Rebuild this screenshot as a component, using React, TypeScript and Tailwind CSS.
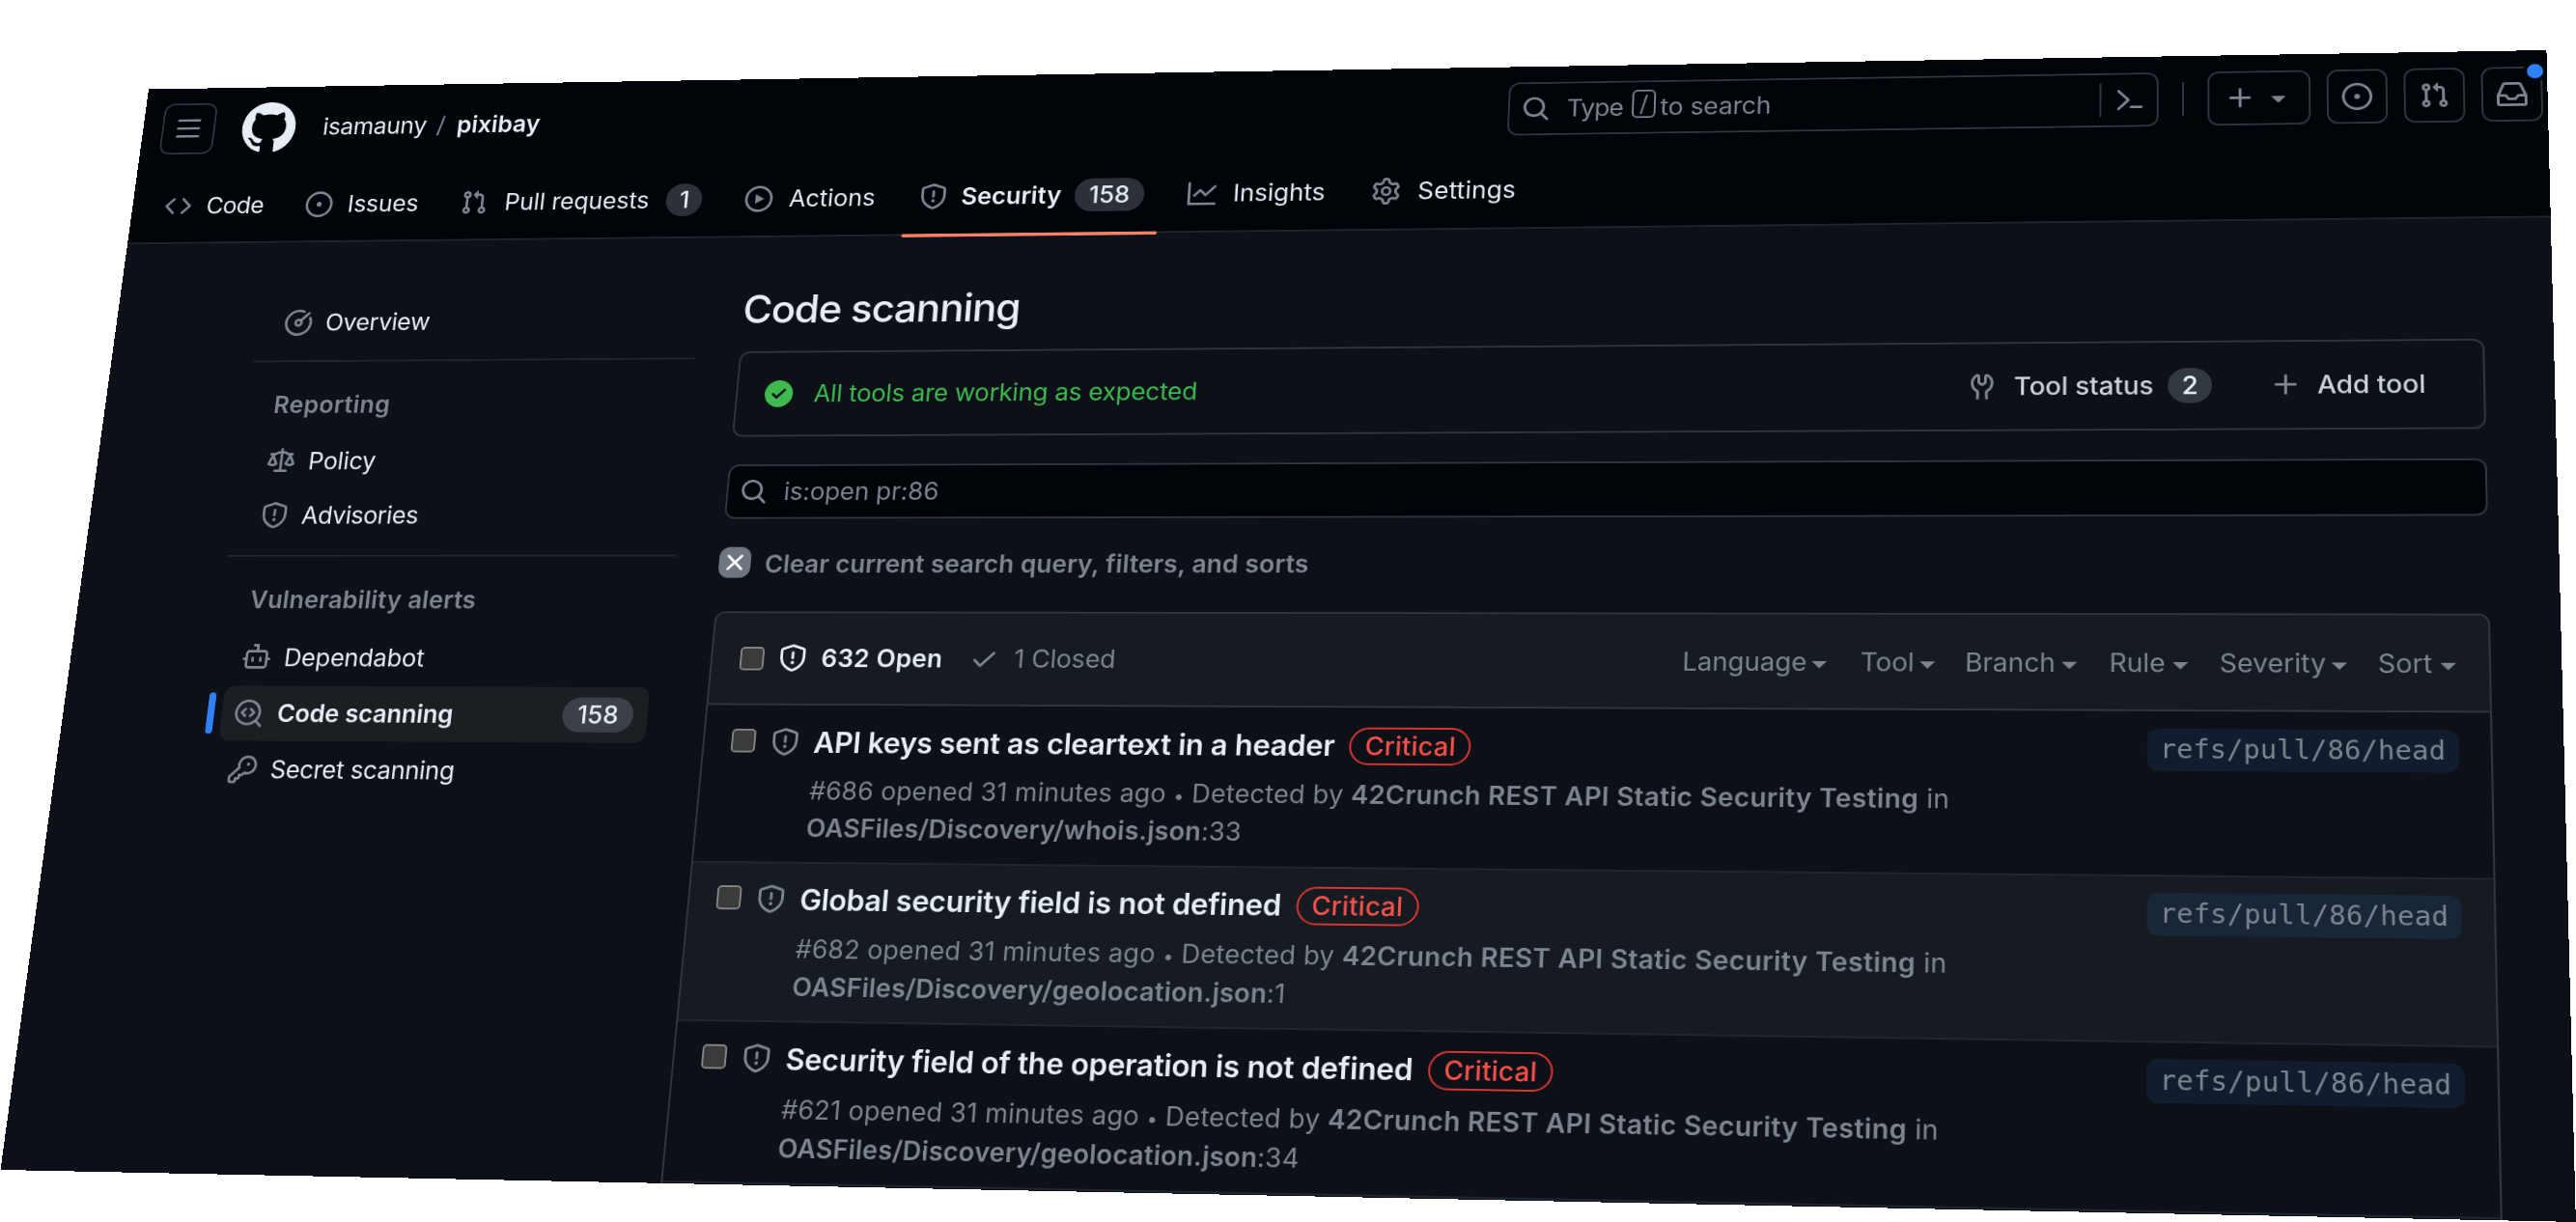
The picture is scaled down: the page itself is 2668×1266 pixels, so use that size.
import React from "react";

const PAGE_W = 2700;
const PAGE_H = 1280;

type Point = [number, number];

// Screen positions of the page's corners, clockwise from the top left.
const CORNERS: [Point, Point, Point, Point] = [
  [154, 92.5],
  [2637.5, 52],
  [2668, 1266],
  [0.5, 1212],
];

// matrix3d() that maps a w x h rectangle onto the four given corners.
function projectOnto(w: number, h: number, [p0, p1, p2, p3]: [Point, Point, Point, Point]) {
  const dx1 = p1[0] - p2[0];
  const dx2 = p3[0] - p2[0];
  const sx = p0[0] - p1[0] + p2[0] - p3[0];
  const dy1 = p1[1] - p2[1];
  const dy2 = p3[1] - p2[1];
  const sy = p0[1] - p1[1] + p2[1] - p3[1];
  const den = dx1 * dy2 - dx2 * dy1;
  const g = (sx * dy2 - dx2 * sy) / den;
  const k = (dx1 * sy - sx * dy1) / den;
  const m = [
    (p1[0] - p0[0] + g * p1[0]) / w, (p1[1] - p0[1] + g * p1[1]) / w, 0, g / w,
    (p3[0] - p0[0] + k * p3[0]) / h, (p3[1] - p0[1] + k * p3[1]) / h, 0, k / h,
    0, 0, 1, 0,
    p0[0], p0[1], 0, 1,
  ];
  return `matrix3d(${m.map((v) => v.toFixed(12)).join(",")})`;
}

const ICONS = {
  bars: "M1 2.75A.75.75 0 0 1 1.75 2h12.5a.75.75 0 0 1 0 1.5H1.75A.75.75 0 0 1 1 2.75Zm0 5A.75.75 0 0 1 1.75 7h12.5a.75.75 0 0 1 0 1.5H1.75A.75.75 0 0 1 1 7.75ZM1.75 12h12.5a.75.75 0 0 1 0 1.5H1.75a.75.75 0 0 1 0-1.5Z",
  github:
    "M8 0c4.42 0 8 3.58 8 8a8.013 8.013 0 0 1-5.45 7.59c-.4.08-.55-.17-.55-.38 0-.27.01-1.13.01-2.2 0-.75-.25-1.23-.54-1.48 1.78-.2 3.65-.88 3.65-3.95 0-.88-.31-1.59-.82-2.15.08-.2.36-1.02-.08-2.12 0 0-.67-.22-2.2.82-.64-.18-1.32-.27-2-.27-.68 0-1.36.09-2 .27-1.53-1.03-2.2-.82-2.2-.82-.44 1.1-.16 1.92-.08 2.12-.51.56-.82 1.28-.82 2.15 0 3.06 1.86 3.75 3.64 3.95-.23.2-.44.55-.51 1.07-.46.21-1.61.55-2.33-.66-.15-.24-.6-.83-1.23-.82-.67.01-.27.38.01.53.34.19.73.9.82 1.13.16.45.68 1.31 2.69.94 0 .67.01 1.3.01 1.49 0 .21-.15.45-.55.38A7.995 7.995 0 0 1 0 8c0-4.42 3.58-8 8-8Z",
  code: "m11.28 3.22 4.25 4.25a.75.75 0 0 1 0 1.06l-4.25 4.25a.749.749 0 0 1-1.275-.326.749.749 0 0 1 .215-.734L13.94 8l-3.72-3.72a.749.749 0 0 1 .326-1.275.749.749 0 0 1 .734.215Zm-6.56 0a.751.751 0 0 1 1.042.018.751.751 0 0 1 .018 1.042L2.06 8l3.72 3.72a.749.749 0 0 1-.326 1.275.749.749 0 0 1-.734-.215L.47 8.53a.75.75 0 0 1 0-1.06Z",
  issue:
    "M8 9.5a1.5 1.5 0 1 0 0-3 1.5 1.5 0 0 0 0 3ZM8 0a8 8 0 1 1 0 16A8 8 0 0 1 8 0ZM1.5 8a6.5 6.5 0 1 0 13 0 6.5 6.5 0 0 0-13 0Z",
  pull: "M1.5 3.25a2.25 2.25 0 1 1 3 2.122v5.256a2.251 2.251 0 1 1-1.5 0V5.372A2.25 2.25 0 0 1 1.5 3.25Zm5.677-.177L9.573.677A.25.25 0 0 1 10 .854V2.5h1A2.5 2.5 0 0 1 13.5 5v5.628a2.251 2.251 0 1 1-1.5 0V5a1 1 0 0 0-1-1h-1v1.646a.25.25 0 0 1-.427.177L7.177 3.427a.25.25 0 0 1 0-.354ZM3.75 2.5a.75.75 0 1 0 0 1.5.75.75 0 0 0 0-1.5Zm0 9.5a.75.75 0 1 0 0 1.5.75.75 0 0 0 0-1.5Zm8.25.75a.75.75 0 1 0 1.5 0 .75.75 0 0 0-1.5 0Z",
  play: "M8 0a8 8 0 1 1 0 16A8 8 0 0 1 8 0ZM1.5 8a6.5 6.5 0 1 0 13 0 6.5 6.5 0 0 0-13 0Zm4.879-2.773 4.264 2.559a.25.25 0 0 1 0 .428l-4.264 2.559A.25.25 0 0 1 6 10.559V5.442a.25.25 0 0 1 .379-.215Z",
  shield:
    "M7.467.133a1.748 1.748 0 0 1 1.066 0l5.25 1.68A1.75 1.75 0 0 1 15 3.48V7c0 1.566-.32 3.182-1.303 4.682-.983 1.498-2.585 2.813-5.032 3.855a1.697 1.697 0 0 1-1.33 0c-2.447-1.042-4.049-2.357-5.032-3.855C1.32 10.182 1 8.566 1 7V3.48a1.75 1.75 0 0 1 1.217-1.667Zm.61 1.429a.25.25 0 0 0-.153 0l-5.25 1.68a.25.25 0 0 0-.174.238V7c0 1.358.275 2.666 1.057 3.86.784 1.194 2.121 2.34 4.366 3.297a.196.196 0 0 0 .154 0c2.245-.956 3.582-2.104 4.366-3.298C13.225 9.666 13.5 8.36 13.5 7V3.48a.251.251 0 0 0-.174-.237l-5.25-1.68ZM8.75 4.75v3a.75.75 0 0 1-1.5 0v-3a.75.75 0 0 1 1.5 0ZM9 10.5a1 1 0 1 1-2 0 1 1 0 0 1 2 0Z",
  graph:
    "M1.5 1.75V13.5h13.75a.75.75 0 0 1 0 1.5H.75a.75.75 0 0 1-.75-.75V1.75a.75.75 0 0 1 1.5 0Zm14.28 2.53-5.25 5.25a.75.75 0 0 1-1.06 0L7 7.06 4.28 9.78a.751.751 0 0 1-1.042-.018.751.751 0 0 1-.018-1.042l3.25-3.25a.75.75 0 0 1 1.06 0L10 7.94l4.72-4.72a.751.751 0 0 1 1.042.018.751.751 0 0 1 .018 1.042Z",
  gear: "M8 0a8.2 8.2 0 0 1 .701.031C9.444.095 9.99.645 10.16 1.29l.288 1.107c.018.066.079.158.212.224.231.114.454.243.668.386.123.082.233.09.299.071l1.103-.303c.644-.176 1.392.021 1.82.63.27.385.506.792.704 1.218.315.675.111 1.422-.364 1.891l-.814.806c-.049.048-.098.147-.088.294.016.257.016.515 0 .772-.01.147.038.246.088.294l.814.806c.475.469.679 1.216.364 1.891a7.977 7.977 0 0 1-.704 1.217c-.428.61-1.176.807-1.82.63l-1.102-.302c-.067-.019-.177-.011-.3.071a5.909 5.909 0 0 1-.668.386c-.133.066-.194.158-.211.224l-.29 1.106c-.168.646-.715 1.196-1.458 1.26a8.006 8.006 0 0 1-1.402 0c-.743-.064-1.289-.614-1.458-1.26l-.289-1.106c-.018-.066-.079-.158-.212-.224a5.738 5.738 0 0 1-.668-.386c-.123-.082-.233-.09-.299-.071l-1.103.303c-.644.176-1.392-.021-1.82-.63a8.12 8.12 0 0 1-.704-1.218c-.315-.675-.111-1.422.363-1.891l.815-.806c.05-.048.098-.147.088-.294a6.214 6.214 0 0 1 0-.772c.01-.147-.038-.246-.088-.294l-.815-.806C.635 6.045.431 5.298.746 4.623a7.92 7.92 0 0 1 .704-1.217c.428-.61 1.176-.807 1.82-.63l1.102.302c.067.019.177.011.3-.071.214-.143.437-.272.668-.386.133-.066.194-.158.211-.224l.29-1.106C6.009.645 6.556.095 7.299.03 7.53.01 7.764 0 8 0Zm-.571 1.525c-.036.003-.108.036-.137.146l-.289 1.105c-.147.561-.549.967-.998 1.189-.173.086-.34.183-.5.29-.417.278-.97.423-1.529.27l-1.103-.303c-.109-.03-.175.016-.195.045-.22.312-.412.644-.573.99-.014.031-.021.11.059.19l.815.806c.411.406.562.957.53 1.456a4.709 4.709 0 0 0 0 .582c.032.499-.119 1.05-.53 1.456l-.815.806c-.081.08-.073.159-.059.19.162.346.353.677.573.989.02.03.085.076.195.046l1.102-.303c.56-.153 1.113-.008 1.53.27.161.107.328.204.501.29.447.222.85.629.997 1.189l.289 1.105c.029.109.101.143.137.146a6.6 6.6 0 0 0 1.142 0c.036-.003.108-.036.137-.146l.289-1.105c.147-.561.549-.967.998-1.189.173-.086.34-.183.5-.29.417-.278.97-.423 1.529-.27l1.103.303c.109.029.175-.016.195-.045.22-.313.411-.644.573-.99.014-.031.021-.11-.059-.19l-.815-.806c-.411-.406-.562-.957-.53-1.456a4.709 4.709 0 0 0 0-.582c-.032-.499.119-1.05.53-1.456l.815-.806c.081-.08.073-.159.059-.19a6.464 6.464 0 0 0-.573-.989c-.02-.03-.085-.076-.195-.046l-1.102.303c-.56.153-1.113.008-1.53-.27a4.44 4.44 0 0 0-.501-.29c-.447-.222-.85-.629-.997-1.189l-.289-1.105c-.029-.11-.101-.143-.137-.146a6.6 6.6 0 0 0-1.142 0ZM11 8a3 3 0 1 1-6 0 3 3 0 0 1 6 0ZM9.5 8a1.5 1.5 0 1 0-3.001.001A1.5 1.5 0 0 0 9.5 8Z",
  search:
    "M10.68 11.74a6 6 0 0 1-7.922-8.982 6 6 0 0 1 8.982 7.922l3.04 3.04a.749.749 0 0 1-.326 1.275.749.749 0 0 1-.734-.215ZM11.5 7a4.499 4.499 0 1 0-8.997 0A4.499 4.499 0 0 0 11.5 7Z",
  prompt:
    "m6.354 8.04-4.773 4.773a.75.75 0 1 0 1.061 1.06L7.945 8.57a.75.75 0 0 0 0-1.06L2.642 2.206a.75.75 0 0 0-1.06 1.061L6.353 8.04ZM8.75 11.5a.75.75 0 0 0 0 1.5h5.5a.75.75 0 0 0 0-1.5h-5.5Z",
  plus: "M7.75 2a.75.75 0 0 1 .75.75V7h4.25a.75.75 0 0 1 0 1.5H8.5v4.25a.75.75 0 0 1-1.5 0V8.5H2.75a.75.75 0 0 1 0-1.5H7V2.75A.75.75 0 0 1 7.75 2Z",
  caret: "m4.427 7.427 3.396 3.396a.25.25 0 0 0 .354 0l3.396-3.396A.25.25 0 0 0 11.396 7H4.604a.25.25 0 0 0-.177.427Z",
  inbox:
    "M2.8 2.06A1.75 1.75 0 0 1 4.41 1h7.18c.7 0 1.333.417 1.61 1.06l2.74 6.395c.04.093.06.194.06.295v4.5A1.75 1.75 0 0 1 14.25 15H1.75A1.75 1.75 0 0 1 0 13.25v-4.5c0-.101.02-.202.06-.295Zm1.61.44a.25.25 0 0 0-.23.152L1.887 8H4.75a.75.75 0 0 1 .6.3L6.625 10h2.75l1.275-1.7a.75.75 0 0 1 .6-.3h2.863L11.82 2.652a.25.25 0 0 0-.23-.152Zm10.09 7h-2.875l-1.275 1.7a.75.75 0 0 1-.6.3h-3.5a.75.75 0 0 1-.6-.3L4.375 9.5H1.5v3.75c0 .138.112.25.25.25h12.5a.25.25 0 0 0 .25-.25Z",
  meter:
    "M8 1.5a6.5 6.5 0 1 0 6.016 4.035.75.75 0 0 1 1.388-.57 8 8 0 1 1-4.37-4.37.75.75 0 0 1-.569 1.389A6.473 6.473 0 0 0 8 1.5Zm6.28.22a.75.75 0 0 1 0 1.06l-4.063 4.064a2.5 2.5 0 1 1-1.06-1.06L13.22 1.72a.75.75 0 0 1 1.06 0ZM7 8a1 1 0 1 0 2 0 1 1 0 0 0-2 0Z",
  law: "M8.75.75V2h.985c.304 0 .603.08.867.231l1.29.736c.038.022.08.033.124.033h2.234a.75.75 0 0 1 0 1.5h-.427l2.111 4.692a.75.75 0 0 1-.154.838l-.53-.53.529.531-.001.002-.002.002-.006.006-.006.005-.01.01-.045.04c-.21.176-.441.327-.686.45C14.556 10.78 13.88 11 13 11a4.498 4.498 0 0 1-2.023-.454 3.544 3.544 0 0 1-.686-.45l-.045-.04-.016-.015-.006-.006-.004-.004v-.001a.75.75 0 0 1-.154-.838L12.178 4.5h-.162c-.305 0-.604-.079-.868-.231l-1.29-.736a.245.245 0 0 0-.124-.033H8.75V13h2.5a.75.75 0 0 1 0 1.5h-6.5a.75.75 0 0 1 0-1.5h2.5V3.5h-.984a.245.245 0 0 0-.124.033l-1.289.737c-.265.15-.564.23-.869.23h-.162l2.112 4.692a.75.75 0 0 1-.154.838l-.53-.53.529.531-.001.002-.002.002-.006.006-.016.015-.045.04c-.21.176-.441.327-.686.45C4.556 10.78 3.88 11 3 11a4.498 4.498 0 0 1-2.023-.454 3.544 3.544 0 0 1-.686-.45l-.045-.04-.016-.015-.006-.006-.004-.004v-.001a.75.75 0 0 1-.154-.838L2.178 4.5H1.75a.75.75 0 0 1 0-1.5h2.234a.249.249 0 0 0 .125-.033l1.288-.737c.265-.15.564-.23.869-.23h.984V.75a.75.75 0 0 1 1.5 0Zm2.945 8.477c.285.135.718.273 1.305.273s1.02-.138 1.305-.273L13 6.327Zm-10 0c.285.135.718.273 1.305.273s1.02-.138 1.305-.273L3 6.327Z",
  dependabot:
    "M5.75 7.5a.75.75 0 0 1 .75.75v1.5a.75.75 0 0 1-1.5 0v-1.5a.75.75 0 0 1 .75-.75Zm5.25.75a.75.75 0 0 0-1.5 0v1.5a.75.75 0 0 0 1.5 0v-1.5ZM6.25 0h2A.75.75 0 0 1 9 .75V3.5h3.25a2.25 2.25 0 0 1 2.25 2.25V8h.75a.75.75 0 0 1 0 1.5h-.75v2.75a2.25 2.25 0 0 1-2.25 2.25h-8.5a2.25 2.25 0 0 1-2.25-2.25V9.5H.75a.75.75 0 0 1 0-1.5h.75V5.75A2.25 2.25 0 0 1 3.75 3.5H7.5v-2H6.25a.75.75 0 0 1 0-1.5ZM3 5.75v6.5c0 .414.336.75.75.75h8.5a.75.75 0 0 0 .75-.75v-6.5a.75.75 0 0 0-.75-.75h-8.5a.75.75 0 0 0-.75.75Z",
  codescan:
    "M8.47 4.97a.75.75 0 0 0 0 1.06L9.94 7.5 8.47 8.97a.75.75 0 1 0 1.06 1.06l2-2a.75.75 0 0 0 0-1.06l-2-2a.75.75 0 0 0-1.06 0ZM6.53 6.03a.75.75 0 0 0-1.06-1.06l-2 2a.75.75 0 0 0 0 1.06l2 2a.75.75 0 1 0 1.06-1.06L5.06 7.5l1.47-1.47ZM12.246 13.307a7.501 7.501 0 1 1 1.06-1.06l2.474 2.473a.749.749 0 0 1-.326 1.275.749.749 0 0 1-.734-.215ZM1.5 7.5a6.002 6.002 0 0 0 3.608 5.504 6.002 6.002 0 0 0 6.486-1.117.748.748 0 0 1 .292-.293A6 6 0 1 0 1.5 7.5Z",
  key: "M10.5 0a5.499 5.499 0 1 1-1.288 10.848l-.932.932a.749.749 0 0 1-.53.22H7v.75a.749.749 0 0 1-.22.53l-.5.5a.749.749 0 0 1-.53.22H5v.75a.749.749 0 0 1-.22.53l-.5.5a.749.749 0 0 1-.53.22h-2A1.75 1.75 0 0 1 0 14.25v-2c0-.199.079-.389.22-.53l4.932-4.932A5.5 5.5 0 0 1 10.5 0Zm-4 5.5c-.001.431.069.86.205 1.269a.75.75 0 0 1-.181.768L1.5 12.56v1.69c0 .138.112.25.25.25h1.69l.06-.06v-1.19a.75.75 0 0 1 .75-.75h1.19l.06-.06v-1.19a.75.75 0 0 1 .75-.75h1.19l1.023-1.025a.75.75 0 0 1 .768-.18A4 4 0 1 0 6.5 5.5ZM11 6a1 1 0 1 1 0-2 1 1 0 0 1 0 2Z",
  tools:
    "M5.433 2.304A4.492 4.492 0 0 0 3.5 6c0 1.598.832 3.002 2.09 3.802.518.328.929.923.902 1.64v.008l-.164 3.337a.75.75 0 1 1-1.498-.073l.163-3.33c.002-.085-.05-.216-.207-.316A5.996 5.996 0 0 1 2 6a5.993 5.993 0 0 1 2.567-4.92 1.482 1.482 0 0 1 1.673-.04c.462.296.76.827.76 1.423v2.82c0 .082.041.16.11.206l.75.51a.25.25 0 0 0 .28 0l.75-.51A.249.249 0 0 0 9 5.282V2.463c0-.596.298-1.127.76-1.423a1.482 1.482 0 0 1 1.673.04A5.993 5.993 0 0 1 14 6a5.996 5.996 0 0 1-2.786 5.068c-.157.1-.209.23-.207.315l.163 3.33a.752.752 0 0 1-1.094.714.75.75 0 0 1-.404-.64l-.164-3.345c-.027-.717.384-1.312.902-1.64A4.495 4.495 0 0 0 12.5 6a4.492 4.492 0 0 0-1.933-3.696c-.024.017-.067.067-.067.159v2.82a1.75 1.75 0 0 1-.767 1.448l-.75.51a1.75 1.75 0 0 1-1.966 0l-.75-.51A1.75 1.75 0 0 1 5.5 5.283v-2.82c0-.092-.043-.142-.067-.159Z",
  check:
    "M13.78 4.22a.75.75 0 0 1 0 1.06l-7.25 7.25a.75.75 0 0 1-1.06 0L2.22 9.28a.751.751 0 0 1 .018-1.042.751.751 0 0 1 1.042-.018L6 10.94l6.72-6.72a.75.75 0 0 1 1.06 0Z",
  checkCircle:
    "M8 16A8 8 0 1 1 8 0a8 8 0 0 1 0 16Zm3.78-9.72a.751.751 0 0 0-.018-1.042.751.751 0 0 0-1.042-.018L6.75 9.19 5.28 7.72a.751.751 0 0 0-1.042.018.751.751 0 0 0-.018 1.042l2 2a.75.75 0 0 0 1.06 0Z",
  x: "M3.72 3.72a.75.75 0 0 1 1.06 0L8 6.94l3.22-3.22a.749.749 0 0 1 1.275.326.749.749 0 0 1-.215.734L9.06 8l3.22 3.22a.749.749 0 0 1-.326 1.275.749.749 0 0 1-.734-.215L8 9.06l-3.22 3.22a.751.751 0 0 1-1.042-.018.751.751 0 0 1-.018-1.042L6.94 8 3.72 4.78a.75.75 0 0 1 0-1.06Z",
};

type IconName = keyof typeof ICONS;

function Icon({ name, className = "" }: { name: IconName; className?: string }) {
  return (
    <svg viewBox="0 0 16 16" fill="currentColor" className={`size-8 shrink-0 ${className}`} aria-hidden="true">
      <path d={ICONS[name]} />
    </svg>
  );
}

function Badge({ children, className = "" }: { children: React.ReactNode; className?: string }) {
  return (
    <span
      className={`flex h-10 shrink-0 items-center justify-center rounded-full bg-[#6e7681]/40 font-medium text-[#e6edf3] ${className}`}
    >
      {children}
    </span>
  );
}

type NavTab = {
  icon: IconName;
  label: string;
  width: string;
  gap: string;
  badge?: string;
  badgeClass?: string;
  active?: boolean;
};

const NAV: NavTab[] = [
  { icon: "code", label: "Code", width: "w-[169px]", gap: "ml-[18px] tracking-[-0.5px]" },
  { icon: "issue", label: "Issues", width: "w-[184px]", gap: "ml-[18px] tracking-[-0.1px]" },
  { icon: "pull", label: "Pull requests", width: "w-[333px]", gap: "ml-[20px] tracking-[-0.1px]", badge: "1", badgeClass: "ml-[20px] w-[42px]" },
  { icon: "play", label: "Actions", width: "w-[201px]", gap: "ml-[19px]" },
  { icon: "shield", label: "Security", width: "w-[305px]", gap: "ml-[16px]", badge: "158", badgeClass: "ml-[15px] w-[79px]", active: true },
  { icon: "graph", label: "Insights", width: "w-[206px]", gap: "ml-[19px]" },
  { icon: "gear", label: "Settings", width: "w-[180px]", gap: "ml-[19px] tracking-[0.2px]" },
];

function HeaderButton({ children, className = "" }: { children: React.ReactNode; className?: string }) {
  return (
    <div
      className={`relative flex h-16 shrink-0 items-center justify-center rounded-xl border-2 border-[#30363d] text-[#7d8590] ${className}`}
    >
      {children}
    </div>
  );
}

function Header() {
  return (
    <header className="h-[195px] border-b-2 border-[#21262d] bg-[#010409] pt-[19px]">
      <div className="flex h-16 items-center pl-[23px]">
        <HeaderButton className="w-16">
          <Icon name="bars" />
        </HeaderButton>
        <Icon name="github" className="ml-[33px] size-16" />
        <span className="ml-[33px] w-[124px] tracking-[-0.25px]">isamauny</span>
        <span className="ml-[12px] w-[24px] text-[#7d8590]">/</span>
        <span className="w-[1207px] font-semibold tracking-[0.1px]">pixibay</span>
        <div className="flex h-16 w-[707px] shrink-0 items-center rounded-xl border-2 border-[#30363d] pl-[13px] text-[#7d8590]">
          <Icon name="search" />
          <span className="ml-[18px] w-[72px] tracking-[-0.8px]">Type</span>
          <span className="-mt-[8px] flex h-[34px] w-[26px] items-center justify-center rounded-md border-2 border-[#7d8590] text-[26px] leading-none">
            /
          </span>
          <span className="ml-[5px] tracking-[-0.2px]">to search</span>
          <span className="ml-auto h-10 w-0.5 bg-[#30363d]" />
          <Icon name="prompt" className="mr-[13px] ml-[14px]" />
        </div>
        <span className="ml-[25px] h-10 w-0.5 shrink-0 bg-[#30363d]" />
        <HeaderButton className="ml-[25px] w-[109px]">
          <Icon name="plus" />
          <Icon name="caret" className="ml-2" />
        </HeaderButton>
        <HeaderButton className="ml-[17px] w-16">
          <Icon name="issue" />
        </HeaderButton>
        <HeaderButton className="ml-[17px] w-16">
          <Icon name="pull" />
        </HeaderButton>
        <HeaderButton className="ml-[17px] w-16">
          <Icon name="inbox" />
          <span className="absolute -top-[9px] -right-[7px] size-[25px] rounded-full border-4 border-[#010409] bg-[#2f81f7]" />
        </HeaderButton>
      </div>
      <nav className="mt-[16px] flex h-[98px] pl-[39px]">
        {NAV.map((tab) => (
          <div key={tab.label} className={`relative flex h-full shrink-0 items-center ${tab.width}`}>
            <Icon name={tab.icon} className="text-[#7d8590]" />
            <span className={`${tab.gap} ${tab.active ? "font-semibold" : ""}`}>{tab.label}</span>
            {tab.badge && <Badge className={tab.badgeClass}>{tab.badge}</Badge>}
            {tab.active && <span className="absolute bottom-0 -left-[17px] h-1 w-[290px] rounded-full bg-[#f78166]" />}
          </div>
        ))}
      </nav>
    </header>
  );
}

function SideItem({ icon, label, className = "" }: { icon: IconName; label: string; className?: string }) {
  return (
    <div className={`flex h-16 items-center pl-[33px] ${className}`}>
      <Icon name={icon} className="text-[#7d8590]" />
      <span className="ml-4">{label}</span>
    </div>
  );
}

function Sidebar() {
  return (
    <aside className="w-[518px] shrink-0 pt-[67px]">
      <SideItem icon="meter" label="Overview" className="tracking-[-0.3px]" />
      <div className="mt-[14px] h-0.5 bg-[#21262d]" />
      <h3 className="mt-[32px] h-10 pl-[32px] leading-10 font-semibold tracking-[0.5px] text-[#7d8590]">Reporting</h3>
      <SideItem icon="law" label="Policy" className="mt-[16px] tracking-[-0.1px]" />
      <SideItem icon="shield" label="Advisories" className="mt-px tracking-[-0.4px]" />
      <div className="mt-[15px] h-0.5 bg-[#21262d]" />
      <h3 className="mt-[31px] h-10 pl-[33px] leading-10 font-semibold tracking-[0.3px] text-[#7d8590]">
        Vulnerability alerts
      </h3>
      <SideItem icon="dependabot" label="Dependabot" className="mt-[16px] tracking-[-0.1px]" />
      <div className="mt-px flex h-16 items-center">
        <span className="h-12 w-2 shrink-0 rounded-full bg-[#2f81f7]" />
        <div className="ml-[9px] flex h-16 w-[486px] items-center rounded-xl bg-[#1b1f23] pr-[16px] pl-[15px]">
          <Icon name="codescan" className="text-[#7d8590]" />
          <span className="ml-[17px] font-semibold tracking-[-0.1px]">Code scanning</span>
          <Badge className="ml-auto w-[80px]">158</Badge>
        </div>
      </div>
      <SideItem icon="key" label="Secret scanning" className="mt-px tracking-[-0.25px]" />
    </aside>
  );
}

function Checkbox({ className = "" }: { className?: string }) {
  return <span className={`size-[27px] shrink-0 rounded-[5px] border-2 border-[#858585] bg-[#3b3b3b] ${className}`} />;
}

const FILTERS = [
  { label: "Language", width: "w-[187px]", gap: "ml-[5px]" },
  { label: "Tool", width: "w-[109px]", gap: "ml-[6px]" },
  { label: "Branch", width: "w-[149px]", gap: "ml-[6px]" },
  { label: "Rule", width: "w-[113px]", gap: "ml-[7px]" },
  { label: "Severity", width: "w-[161px]", gap: "ml-[6px]" },
  { label: "Sort", width: "w-[112px]", gap: "ml-[8px]" },
];

const ALERTS = [
  {
    title: "API keys sent as cleartext in a header",
    id: "#686",
    file: "OASFiles/Discovery/whois.json",
    line: "33",
    row: "h-[177px] pt-[19px]",
  },
  {
    title: "Global security field is not defined",
    id: "#682",
    file: "OASFiles/Discovery/geolocation.json",
    line: "1",
    row: "h-[176px] border-t-2 bg-[#161b22] pt-[17px]",
  },
  {
    title: "Security field of the operation is not defined",
    id: "#621",
    file: "OASFiles/Discovery/geolocation.json",
    line: "34",
    row: "h-[176px] border-t-2 pt-[17px]",
  },
];

function AlertRow({ alert }: { alert: (typeof ALERTS)[number] }) {
  return (
    <div className={`flex items-start border-[#21262d] pl-[30px] ${alert.row}`}>
      <Checkbox className="mt-[8px]" />
      <Icon name="shield" className="mt-[7px] ml-[17px] text-[#7d8590]" />
      <div className="ml-[16px]">
        <div className="flex h-12 items-center">
          <span className="text-[32px] font-semibold tracking-[-0.2px]">{alert.title}</span>
          <span className="ml-[16px] flex h-[42px] w-[130px] items-center justify-center rounded-full border-2 border-[#da3633] font-medium tracking-[0.3px] text-[#f85149]">
            Critical
          </span>
        </div>
        <div className="mt-[9px] tracking-[0.25px] text-[#7d8590]">
          <p className="h-[42px] leading-[42px]">
            {alert.id} opened 31 minutes ago <span className="text-[20px]">•</span> Detected by{" "}
            <b className="font-semibold tracking-[0.38px]">42Crunch REST API Static Security Testing</b> in
          </p>
          <p className="h-[42px] leading-[42px]">
            <b className="font-semibold">{alert.file}</b>:{alert.line}
          </p>
        </div>
      </div>
      <span className="mr-[32px] ml-auto flex h-[46px] w-[315px] shrink-0 items-center justify-center rounded-xl bg-[#388bfd]/10 font-['DejaVu_Sans_Mono',monospace] tracking-[0.15px] text-[#7d8590]">
        refs/pull/86/head
      </span>
    </div>
  );
}

function AlertTable() {
  return (
    <section className="mt-[39px] h-[700px] w-[1893px] overflow-hidden rounded-t-xl border-2 border-b-0 border-[#30363d]">
      <div className="flex h-[106px] items-center border-b-2 border-[#30363d] bg-[#161b22] pl-[31px]">
        <Checkbox />
        <Icon name="shield" className="ml-[16px]" />
        <span className="ml-[16px] font-semibold tracking-[0.3px]">632 Open</span>
        <Icon name="check" className="ml-[30px] text-[#7d8590]" />
        <span className="ml-[17px] text-[#7d8590]">1 Closed</span>
        <div className="ml-auto flex pt-[2px] text-[#7d8590]">
          {FILTERS.map((f) => (
            <span key={f.label} className={`flex items-center ${f.width}`}>
              {f.label}
              <svg viewBox="0 0 16 8" fill="currentColor" className={`mt-[6px] h-2 w-4 ${f.gap}`} aria-hidden="true">
                <path d="M0 0h16L8 8Z" />
              </svg>
            </span>
          ))}
        </div>
      </div>
      {ALERTS.map((alert) => (
        <AlertRow key={alert.id} alert={alert} />
      ))}
      <div className="border-t-2 border-[#21262d]" />
    </section>
  );
}

function Main() {
  return (
    <main className="ml-[50px] w-[1893px] pt-[57px]">
      <h1 className="-ml-px h-[60px] text-[46px] leading-[60px] font-[450] tracking-[-1.1px]">Code scanning</h1>
      <div className="mt-[21px] flex h-[102px] items-center rounded-xl border-2 border-[#30363d] pl-[31px]">
        <Icon name="checkCircle" className="text-[#3fb950]" />
        <span className="ml-[24px] tracking-[-0.2px] text-[#3fb950]">All tools are working as expected</span>
        <div className="mr-[59px] ml-auto flex items-center font-[550] text-[#c9d1d9]">
          <Icon name="tools" className="text-[#7d8590]" />
          <span className="ml-[18px]">Tool status</span>
          <Badge className="ml-[15px] w-[46px]">2</Badge>
          <Icon name="plus" className="ml-[61px] text-[#7d8590]" />
          <span className="ml-[16px]">Add tool</span>
        </div>
      </div>
      <div className="mt-[33px] flex h-16 items-center rounded-xl border-2 border-[#30363d] bg-[#010409] pl-[13px] text-[#7d8590]">
        <Icon name="search" />
        <span className="ml-[18px]">is:open pr:86</span>
      </div>
      <div className="mt-[33px] -ml-px flex h-9 items-center text-[#7d8590]">
        <span className="flex size-9 items-center justify-center rounded-xl bg-[#6e7681] text-white">
          <Icon name="x" />
        </span>
        <span className="mt-[3px] ml-[16px] font-semibold tracking-[0.1px]">
          Clear current search query, filters, and sorts
        </span>
      </div>
      <AlertTable />
    </main>
  );
}

export default function App() {
  return (
    <div className="h-[1266px] w-[2668px] overflow-hidden bg-white">
      <div
        className="h-[1280px] w-[2700px] origin-top-left overflow-hidden bg-[#0d1117] font-[Inter,sans-serif] text-[28px] leading-10 whitespace-nowrap text-[#e6edf3]"
        style={{ transform: projectOnto(PAGE_W, PAGE_H, CORNERS) }}
      >
        <Header />
        <div className="flex pl-[168px]">
          <Sidebar />
          <Main />
        </div>
      </div>
    </div>
  );
}
